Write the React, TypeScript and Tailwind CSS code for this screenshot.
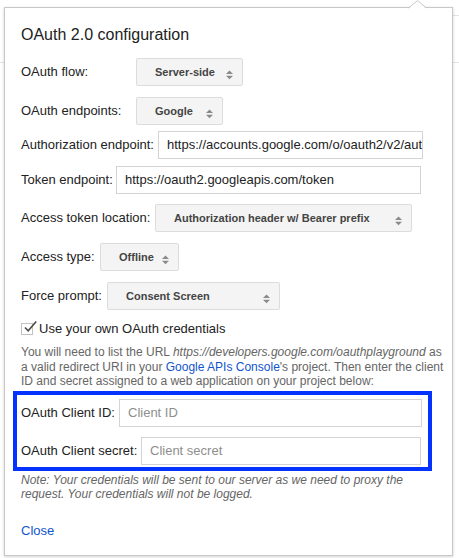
import React from "react";

function Arrows() {
  return (
    <svg width="7" height="10" viewBox="0 0 7 10" className="absolute right-[9px] top-[11px]">
      <polygon points="0,4 3.5,0.5 7,4" fill="#8a8a8a" />
      <polygon points="0,5.8 3.5,9.3 7,5.8" fill="#8a8a8a" />
    </svg>
  );
}

function SelectBox({ text, w }: { text: string; w: string }) {
  return (
    <div
      className={`relative h-[28px] ${w} rounded-[2px] border border-[#dcdcdc] bg-[#f4f4f4] pl-[18px] flex items-center text-[11px] font-bold text-[#444] whitespace-nowrap`}
    >
      {text}
      <Arrows />
    </div>
  );
}

function TextInput({ value, placeholder, w }: { value?: string; placeholder?: string; w: string }) {
  return (
    <div
      className={`h-[28px] ${w} border border-[#d4d4d4] bg-white px-[8px] flex items-center text-[13px] whitespace-nowrap overflow-hidden ${
        value ? "text-[#222]" : "text-[#8e8e8e]"
      }`}
    >
      {value ?? placeholder}
    </div>
  );
}

function Label({ children, w }: { children: React.ReactNode; w: string }) {
  return <div className={`${w} shrink-0 whitespace-nowrap text-[13px] text-[#222]`}>{children}</div>;
}

export default function App() {
  return (
    <div className="relative w-[459px] h-[558px] bg-white overflow-hidden font-['Liberation_Sans',Arial,Helvetica,sans-serif]">
      {/* page behind the popup */}
      <div className="absolute left-0 right-0 top-[62px] h-px bg-[#e3e3e3]" />
      <div className="absolute left-[440px] right-0 top-[15px] h-px bg-[#e3e3e3]" />

      <div className="relative z-10 ml-[4px] mt-[7px] w-[449px] border border-[#c8c8c8] bg-white pl-[16px] pr-[8px] pt-[18px] pb-[16px] shadow-[0_1px_3px_rgba(0,0,0,0.18)]">
        <svg width="19" height="10" viewBox="0 0 19 10" className="absolute left-[403px] top-[-8px]">
          <polygon points="0.5,9 9.5,0.6 18.5,9" fill="#ffffff" />
          <polyline points="0.5,8 9.5,0.6 18.5,8" fill="none" stroke="#c8c8c8" strokeWidth="1" />
        </svg>

        <div className="text-[16px] leading-[18px] text-[#222]">OAuth 2.0 configuration</div>

        <div className="mt-[14px] flex items-center">
          <Label w="w-[115px]">OAuth flow:</Label>
          <SelectBox text="Server-side" w="w-[107px]" />
        </div>

        <div className="mt-[11px] flex items-center">
          <Label w="w-[115px]">OAuth endpoints:</Label>
          <SelectBox text="Google" w="w-[87px]" />
        </div>

        <div className="mt-[6px] flex items-center">
          <Label w="w-[137px]">Authorization endpoint:</Label>
          <TextInput value="https://accounts.google.com/o/oauth2/v2/auth" w="w-[265px]" />
        </div>

        <div className="mt-[7px] flex items-center">
          <Label w="w-[95px]">Token endpoint:</Label>
          <TextInput value="https://oauth2.googleapis.com/token" w="w-[305px]" />
        </div>

        <div className="mt-[10px] flex items-center">
          <Label w="w-[134px]">Access token location:</Label>
          <SelectBox text="Authorization header w/ Bearer prefix" w="w-[257px]" />
        </div>

        <div className="mt-[11px] flex items-center">
          <Label w="w-[79px]">Access type:</Label>
          <SelectBox text="Offline" w="w-[79px]" />
        </div>

        <div className="mt-[11px] flex items-center">
          <Label w="w-[86px]">Force prompt:</Label>
          <SelectBox text="Consent Screen" w="w-[173px]" />
        </div>

        <div className="mt-[10px] flex h-[18px] items-center">
          <span className="relative ml-0 mr-[6px] h-[12px] w-[12px] shrink-0 border border-[#c3c3c3] bg-white">
            <svg width="15" height="13" viewBox="0 0 15 13" className="absolute left-[1px] top-[-4px]">
              <polyline points="2,7.5 5.2,10.8 13.2,1.5" fill="none" stroke="#4a4a4a" strokeWidth="1.6" />
            </svg>
          </span>
          <span className="text-[13px] text-[#222]">Use your own OAuth credentials</span>
        </div>

        <div className="mt-[7px] whitespace-nowrap text-[12px] leading-[14.5px] text-[#666]">
          You will need to list the URL <i>https://developers.google.com/oauthplayground</i> as
          <br />
          a valid redirect URI in your <span className="text-[#1155cc]">Google APIs Console</span>'s project. Then enter the client
          <br />
          ID and secret assigned to a web application on your project below:
        </div>

        <div className="-ml-[8px] mt-[2.5px] w-[419px] border-[4px] border-[#0433ff] pl-[4px] pt-[4px] pb-[2px]">
          <div className="flex items-center">
            <Label w="w-[98px]">OAuth Client ID:</Label>
            <TextInput placeholder="Client ID" w="w-[303px]" />
          </div>
          <div className="mt-[10px] flex items-center">
            <Label w="w-[120px]">OAuth Client secret:</Label>
            <TextInput placeholder="Client secret" w="w-[280px]" />
          </div>
        </div>

        <div className="mt-[3px] whitespace-nowrap text-[12px] italic leading-[13.5px] text-[#666]">
          Note: Your credentials will be sent to our server as we need to proxy the
          <br />
          request. Your credentials will not be logged.
        </div>

        <div className="mt-[22px] text-[13px] leading-[16px] text-[#1155cc]">Close</div>
      </div>
    </div>
  );
}
